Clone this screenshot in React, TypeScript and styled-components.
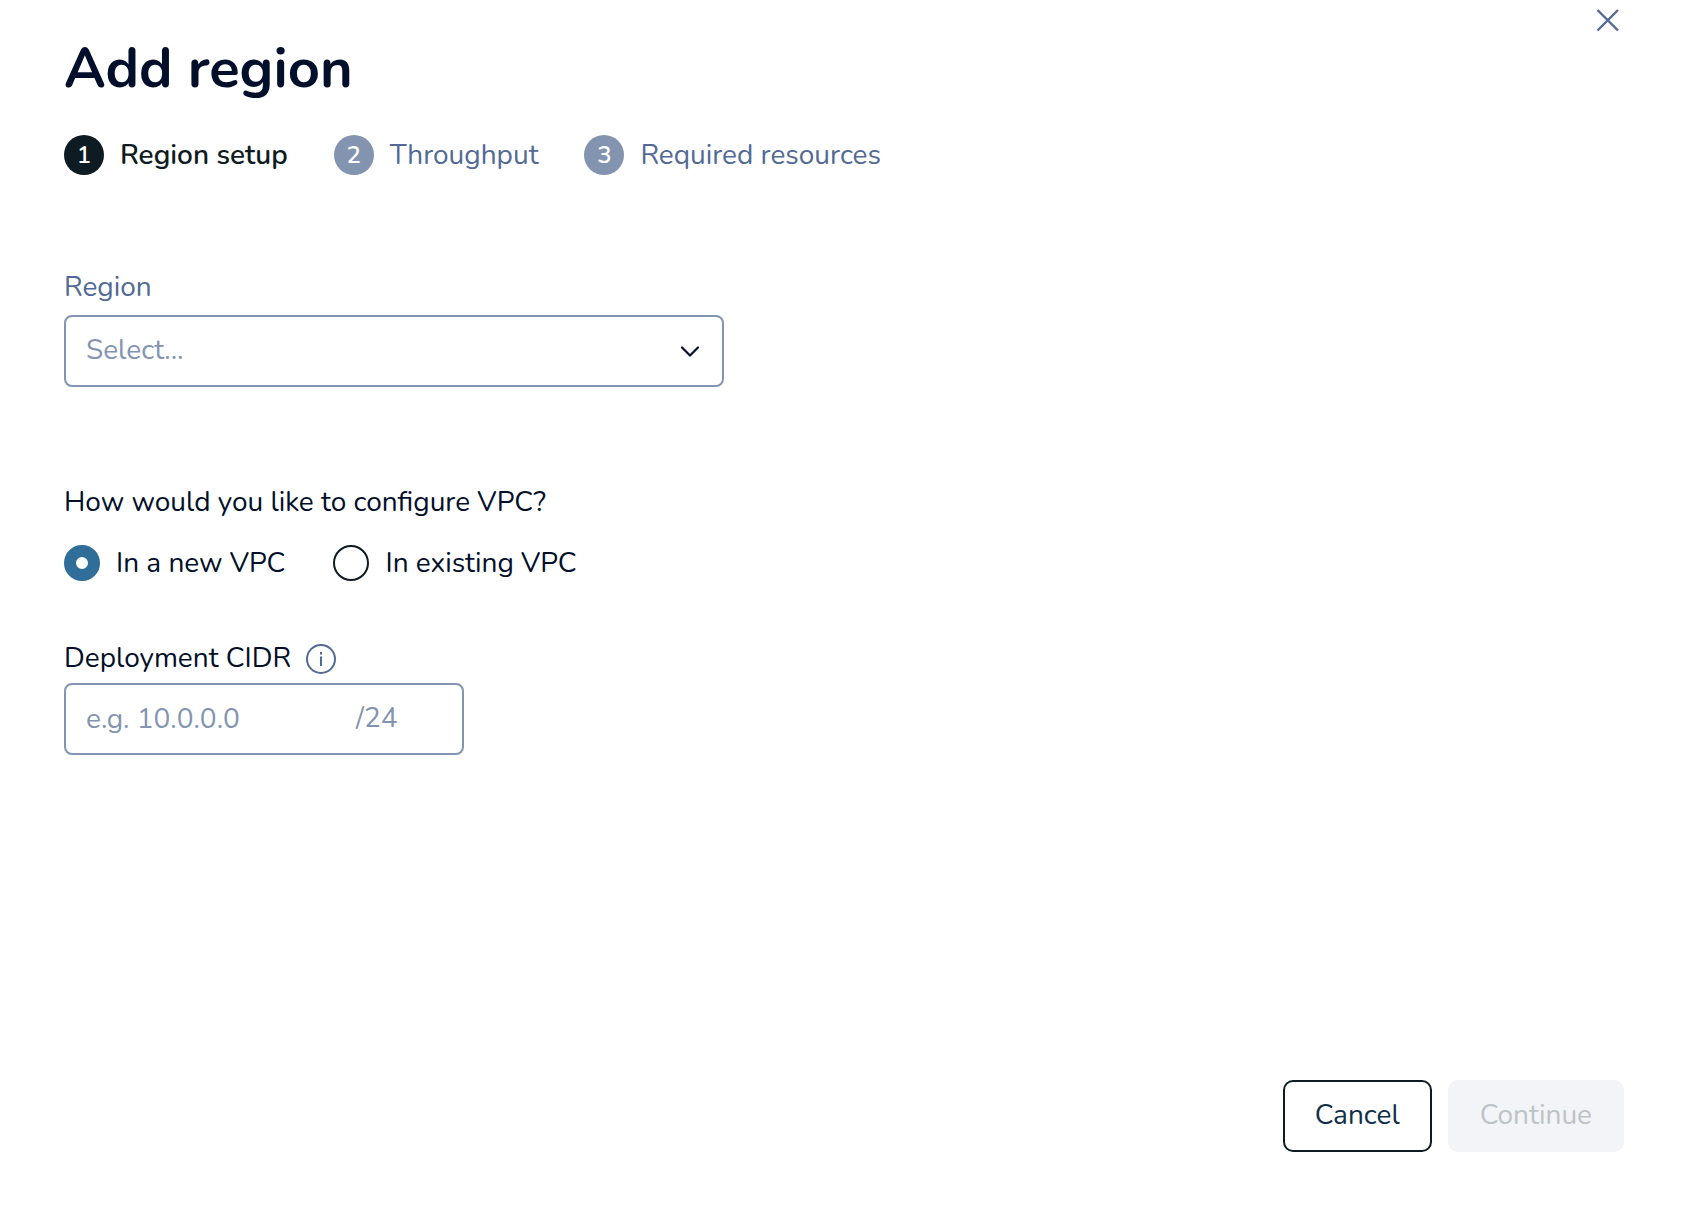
import React, { useState } from "react";
import styled, { createGlobalStyle } from "styled-components";

const color = {
  heading: "#020f2a",
  ink: "#0e1b22",
  body: "#020f2a",
  link: "#526a95",
  muted: "#8394b0",
  accent: "#306d98",
  cancel: "#102f48",
  disabledText: "#bdc3c7",
  disabledFill: "#f3f4f8",
};

const GlobalStyle = createGlobalStyle`
  *, *::before, *::after { box-sizing: border-box; }
  body {
    margin: 0;
    background: #fff;
    color: ${color.body};
    font-family: Nunito, Lato, "Noto Sans", sans-serif;
    font-size: 28px;
    line-height: 40px;
  }
  button, input, select { font: inherit; color: inherit; }
`;

const Dialog = styled.main`
  position: relative;
  display: flex;
  flex-direction: column;
  min-height: 100vh;
  padding: 33px 74px 58px 64px;
`;

const CloseButton = styled.button`
  position: absolute;
  top: 0;
  right: 72px;
  display: flex;
  padding: 0 6px;
  border: 0;
  background: none;
  color: ${color.link};
  cursor: pointer;
`;

const Title = styled.h1`
  margin: 0;
  color: ${color.heading};
  font-size: 56px;
  font-weight: 700;
  line-height: 72px;
`;

const Steps = styled.ol`
  display: flex;
  flex-wrap: wrap;
  gap: 16px 46px;
  margin: 30px 0 0;
  padding: 0;
  list-style: none;
`;

const Step = styled.li<{ $current: boolean }>`
  display: flex;
  align-items: center;
  gap: 16px;
  color: ${(p) => (p.$current ? color.ink : color.link)};
  font-weight: ${(p) => (p.$current ? 600 : 400)};
`;

const StepNumber = styled.span<{ $current: boolean }>`
  display: flex;
  align-items: center;
  justify-content: center;
  width: 40px;
  height: 40px;
  border-radius: 50%;
  background: ${(p) => (p.$current ? color.ink : color.muted)};
  color: #fff;
  font-size: 24px;
  font-weight: 600;
`;

const Form = styled.form`
  display: flex;
  flex: 1;
  flex-direction: column;
  margin-top: 92px;
`;

const FieldLabel = styled.label`
  color: ${color.link};
`;

const SelectBox = styled.div`
  display: grid;
  align-items: center;
  width: 100%;
  max-width: 660px;
  margin-top: 8px;

  > * { grid-area: 1 / 1; }
  > svg {
    justify-self: end;
    margin-right: 22px;
    pointer-events: none;
  }
`;

const Select = styled.select`
  width: 100%;
  height: 72px;
  padding: 0 64px 2px 20px;
  border: 2px solid ${color.muted};
  border-radius: 8px;
  background: #fff;
  color: ${color.muted};
  appearance: none;
`;

const RadioGroup = styled.fieldset`
  min-width: 0;
  margin: 95px 0 0;
  padding: 0;
  border: 0;
`;

const Legend = styled.legend`
  padding: 0;
`;

const RadioRow = styled.div`
  display: flex;
  flex-wrap: wrap;
  gap: 16px 48px;
  padding-top: 21px;
`;

const RadioLabel = styled.label`
  display: flex;
  align-items: center;
  gap: 16px;
  cursor: pointer;
`;

const Radio = styled.input`
  width: 36px;
  height: 36px;
  margin: 0;
  border: 2px solid ${color.ink};
  border-radius: 50%;
  background: #fff;
  appearance: none;

  &:checked {
    border: 12px solid ${color.accent};
  }
`;

const LabelRow = styled.div`
  display: flex;
  align-items: center;
  gap: 15px;
  margin-top: 55px;
`;

const InfoButton = styled.button`
  display: flex;
  padding: 2px 0 0;
  border: 0;
  background: none;
  color: ${color.link};
`;

const CidrBox = styled.div`
  display: flex;
  align-items: center;
  width: 100%;
  max-width: 400px;
  height: 72px;
  margin-top: 5px;
  padding: 0 20px;
  border: 2px solid ${color.muted};
  border-radius: 8px;
  color: ${color.muted};
`;

const CidrInput = styled.input`
  flex: 1;
  min-width: 0;
  padding: 0;
  border: 0;
  outline: 0;
  background: none;

  &::placeholder {
    color: ${color.muted};
    opacity: 1;
  }
`;

const Suffix = styled.span`
  width: 86px;
  padding-bottom: 2px;
`;

const Footer = styled.footer`
  display: flex;
  justify-content: flex-end;
  gap: 16px;
  margin-top: auto;
`;

const Button = styled.button`
  height: 72px;
  padding: 0 30px 2px;
  border: 2px solid ${color.ink};
  border-radius: 10px;
  background: #fff;
  color: ${color.cancel};
  cursor: pointer;

  &:disabled {
    border-color: ${color.disabledFill};
    background: ${color.disabledFill};
    color: ${color.disabledText};
    cursor: default;
  }
`;

const steps = ["Region setup", "Throughput", "Required resources"];

const vpcOptions = [
  { value: "new", label: "In a new VPC" },
  { value: "existing", label: "In existing VPC" },
];

export default function App() {
  const [vpc, setVpc] = useState("new");
  const [cidr, setCidr] = useState("");

  return (
    <>
      <GlobalStyle />
      <Dialog>
        <CloseButton type="button" aria-label="Close">
          <svg width="24" height="42" viewBox="0 0 24 42" fill="none" stroke="currentColor" strokeWidth="2.4">
            <path d="M1.5 10 22 30.5M22 10 1.5 30.5" />
          </svg>
        </CloseButton>
        <Title>Add region</Title>
        <Steps>
          {steps.map((label, i) => (
            <Step key={label} $current={i === 0} aria-current={i === 0 ? "step" : undefined}>
              <StepNumber $current={i === 0}>{i + 1}</StepNumber>
              {label}
            </Step>
          ))}
        </Steps>
        <Form onSubmit={(e) => e.preventDefault()}>
          <FieldLabel htmlFor="region">Region</FieldLabel>
          <SelectBox>
            <Select id="region" defaultValue="">
              <option value="">Select...</option>
            </Select>
            <svg width="24" height="24" viewBox="0 0 24 24" fill="none" stroke={color.heading} strokeWidth="2.2" strokeLinecap="round" strokeLinejoin="round">
              <path d="M4 8.5l8 8 8-8" />
            </svg>
          </SelectBox>
          <RadioGroup>
            <Legend>How would you like to configure VPC?</Legend>
            <RadioRow>
              {vpcOptions.map((o) => (
                <RadioLabel key={o.value}>
                  <Radio
                    type="radio"
                    name="vpc"
                    value={o.value}
                    checked={vpc === o.value}
                    onChange={() => setVpc(o.value)}
                  />
                  {o.label}
                </RadioLabel>
              ))}
            </RadioRow>
          </RadioGroup>
          <LabelRow>
            <label htmlFor="cidr">Deployment CIDR</label>
            <InfoButton type="button" aria-label="About deployment CIDR">
              <svg width="30" height="30" viewBox="0 0 30 30" fill="none" stroke="currentColor" strokeWidth="2">
                <circle cx="15" cy="15" r="14" />
                <path d="M15 12.5V22M15 8v2.4" />
              </svg>
            </InfoButton>
          </LabelRow>
          <CidrBox>
            <CidrInput id="cidr" placeholder="e.g. 10.0.0.0" value={cidr} onChange={(e) => setCidr(e.target.value)} />
            <Suffix>/24</Suffix>
          </CidrBox>
          <Footer>
            <Button type="button">Cancel</Button>
            <Button type="submit" disabled>
              Continue
            </Button>
          </Footer>
        </Form>
      </Dialog>
    </>
  );
}
